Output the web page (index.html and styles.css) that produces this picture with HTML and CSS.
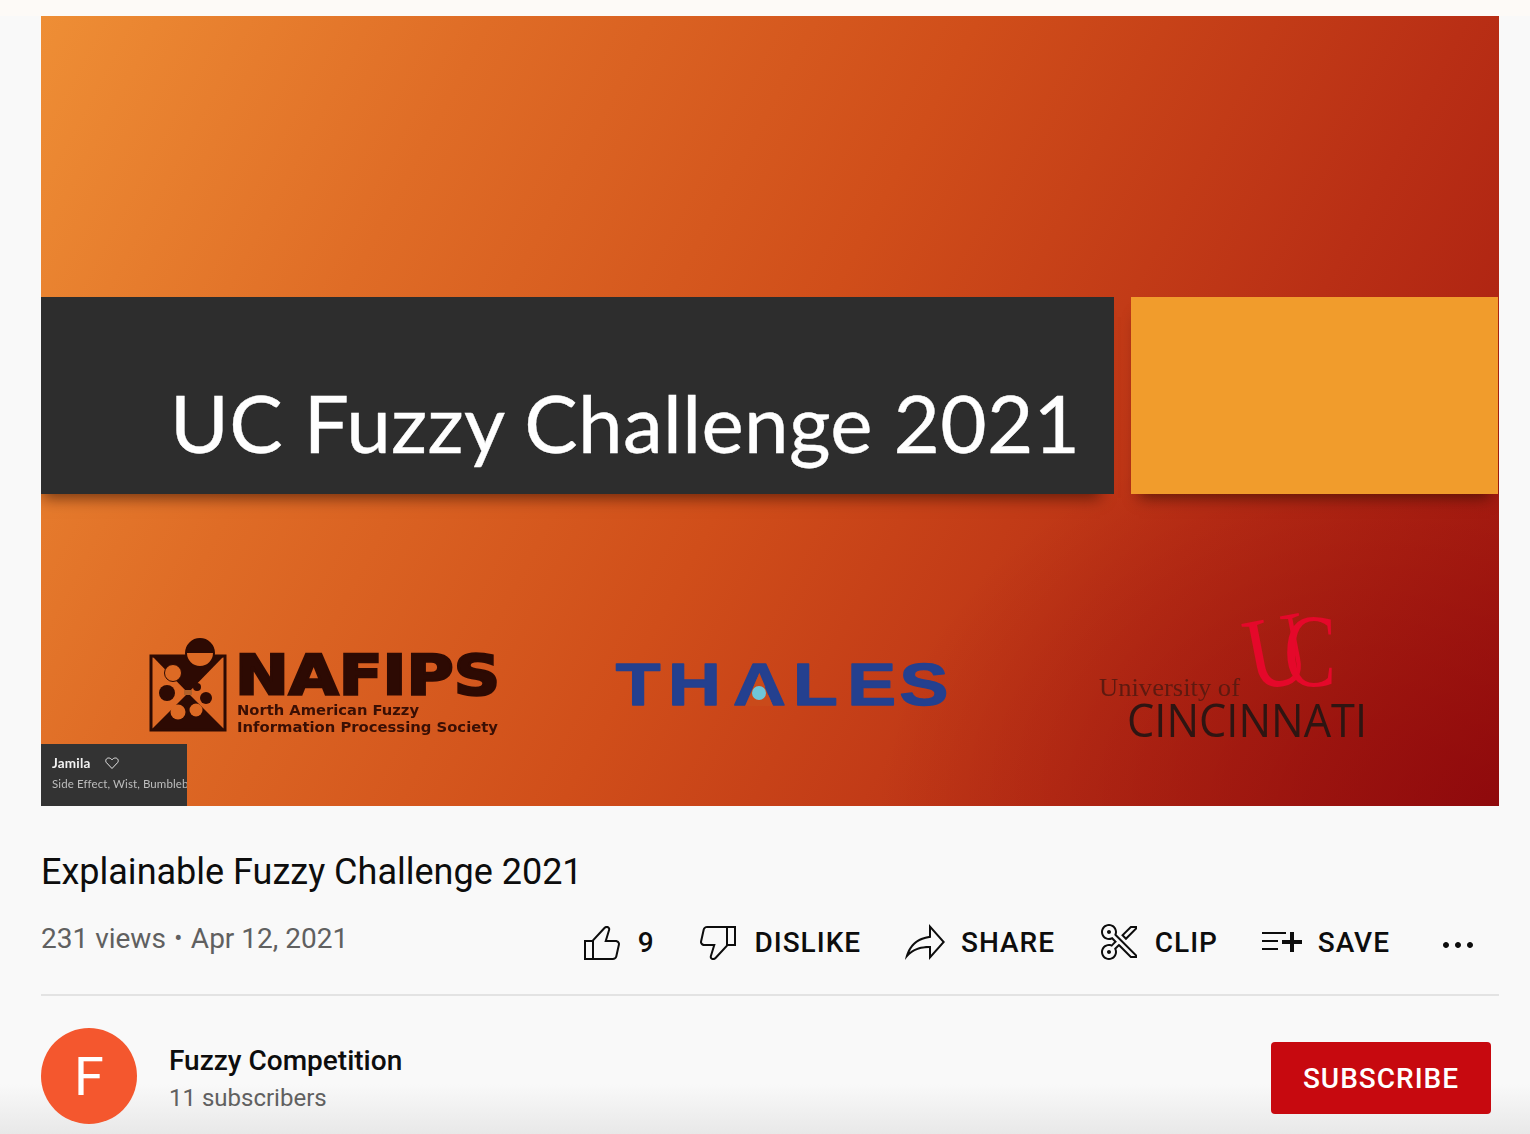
FILE: index.html
```html
<!DOCTYPE html>
<html lang="en">
<head>
<meta charset="utf-8">
<title>Explainable Fuzzy Challenge 2021</title>
<link rel="stylesheet" href="styles.css">
</head>
<body>
<div class="top-strip"></div>
<main class="watch">
  <section class="slide">
    <div class="band"></div>
    <div class="accent"></div>
    <svg class="slide-art" viewBox="41 16 1458 790" xmlns="http://www.w3.org/2000/svg">
      <text class="slide-title" x="170" y="453" textLength="910" lengthAdjust="spacing">UC Fuzzy Challenge 2021</text>
      <g class="logo-blur">
        <!-- NAFIPS emblem -->
        <path d="M153 657H223L188 693Z" fill="#2d0a03"/>
        <path d="M152 729L188 693L224 729Z" fill="#2d0a03"/>
        <rect x="151" y="656" width="74" height="74" fill="none" stroke="#2d0a03" stroke-width="3"/>
        <circle cx="173" cy="673" r="8.5" fill="#dd6a24" stroke="#2d0a03" stroke-width="1"/>
        <circle cx="200" cy="653" r="14" fill="#dd6a24" stroke="#2d0a03" stroke-width="2"/>
        <path d="M186 653a14 14 0 0 1 28 0Z" fill="#2d0a03"/>
        <circle cx="167" cy="693" r="8" fill="#2d0a03"/>
        <circle cx="206" cy="698" r="6" fill="#2d0a03"/>
        <circle cx="197" cy="687" r="4" fill="#2d0a03"/>
        <circle cx="178" cy="712" r="7.5" fill="#dd6a24"/>
        <circle cx="196" cy="710" r="6.5" fill="#dd6a24"/>
        <rect x="184" y="690" width="8" height="5" fill="#b0602a"/>
        <text class="nafips" x="235" y="694" textLength="265" lengthAdjust="spacingAndGlyphs">NAFIPS</text>
        <text class="nafips-sub" x="237" y="715" textLength="182" lengthAdjust="spacingAndGlyphs">North American Fuzzy</text>
        <text class="nafips-sub" x="237" y="732" textLength="261" lengthAdjust="spacingAndGlyphs">Information Processing Society</text>
        <!-- Thales -->
        <text class="thales" transform="scale(1.22 1)" x="504.7 547.6 600.8 650 694.4 737.3" y="705">THALES</text>
        <path d="M759 674L745 706H773Z" fill="#c94a1a"/>
        <circle cx="759" cy="693" r="7" fill="#6fc6d8"/>
        <!-- University of Cincinnati -->
        <text class="uc-mark" transform="rotate(-11 1277 655)" x="1246" y="686" textLength="62" lengthAdjust="spacingAndGlyphs">U</text>
        <text class="uc-mark" x="1284" y="686" textLength="52" lengthAdjust="spacingAndGlyphs">C</text>
        <text class="uc-univ" x="1099" y="696" textLength="141" lengthAdjust="spacingAndGlyphs">University of</text>
        <text class="uc-city" x="1127" y="737" textLength="240" lengthAdjust="spacingAndGlyphs">CINCINNATI</text>
      </g>
    </svg>
    <div class="now-playing">
      <div class="np-head">
        <span class="np-name">Jamila</span>
        <svg class="np-heart" viewBox="0 0 14 14" xmlns="http://www.w3.org/2000/svg"><path d="M7 12.5L1.4 6.6C0 4.9 1 2 3.6 2C5 2 6.2 2.7 7 3.8C7.8 2.7 9 2 10.4 2C13 2 14 4.9 12.6 6.6Z" fill="none" stroke="#e8e8e8" stroke-width="1"/></svg>
      </div>
      <div class="np-artists">Side Effect, Wist, Bumblebee</div>
    </div>
  </section>

  <h1 class="video-title">Explainable Fuzzy Challenge 2021</h1>

  <div class="info-row">
    <div class="video-meta">231 views <span class="dot">•</span> Apr 12, 2021</div>
    <div class="actions">
      <button class="action">
        <svg class="icon" viewBox="0 0 24 24"><path d="M18.77,11h-4.23l1.52-4.94C16.38,5.03,15.54,4,14.38,4c-0.58,0-1.14,0.24-1.52,0.65L7,11H3v10h4h1h9.43 c1.06,0,1.98-0.67,2.19-1.61l1.34-6C21.23,12.15,20.18,11,18.77,11z M7,20H4v-8h3V20z M19.98,13.17l-1.34,6 C18.54,19.65,18.03,20,17.43,20H8v-8.61l5.6-6.06C13.79,5.12,14.08,5,14.38,5c0.26,0,0.5,0.11,0.63,0.3 c0.07,0.1,0.15,0.26,0.09,0.47l-1.52,4.94L13.18,12h1.35h4.23c0.41,0,0.8,0.17,1.03,0.46C19.92,12.61,20.05,12.86,19.98,13.17z"/></svg>
        <span>9</span>
      </button>
      <button class="action">
        <svg class="icon" viewBox="0 0 24 24"><path d="M17,4h-1H6.57C5.5,4,4.59,4.67,4.38,5.61l-1.34,6C2.77,12.85,3.82,14,5.23,14h4.23l-1.52,4.94C7.62,19.97,8.46,21,9.62,21 c0.58,0,1.14-0.24,1.52-0.65L17,14h4V4H17z M10.4,19.67C10.21,19.88,9.92,20,9.62,20c-0.26,0-0.5-0.11-0.63-0.3 c-0.07-0.1-0.15-0.26-0.09-0.47l1.52-4.94l0.4-1.29H9.46H5.23c-0.41,0-0.8-0.17-1.03-0.46c-0.12-0.15-0.25-0.4-0.18-0.72l1.34-6 C5.46,5.35,5.97,5,6.57,5H16v8.61L10.4,19.67z M20,13h-3V5h3V13z"/></svg>
        <span>DISLIKE</span>
      </button>
      <button class="action">
        <svg class="icon" viewBox="0 0 24 24"><path d="M15,5.63L20.66,12L15,18.37V15v-1h-1c-3.96,0-7.14,1-9.75,3.09c1.84-4.07,5.11-6.4,9.89-7.1L15,9.86V9V5.63 M14,3v6 C6.22,10.13,3.11,15.33,2,21c2.78-3.97,6.44-6,12-6v6l8-9L14,3L14,3z"/></svg>
        <span>SHARE</span>
      </button>
      <button class="action">
        <svg class="icon" viewBox="0 0 24 24"><path d="M8,7c0,0.55-0.45,1-1,1S6,7.55,6,7c0-0.55,0.45-1,1-1S8,6.45,8,7z M7,16c-0.55,0-1,0.45-1,1c0,0.55,0.45,1,1,1s1-0.45,1-1 C8,16.45,7.55,16,7,16z M10.79,8.23L21,18.44V20h-3.27l-5.76-5.76l-1.27,1.27C10.89,15.97,11,16.47,11,17c0,2.21-1.79,4-4,4 s-4-1.79-4-4c0-2.21,1.79-4,4-4c0.42,0,0.81,0.08,1.19,0.2l1.37-1.37l-1.11-1.11C8,10.89,7.51,11,7,11c-2.21,0-4-1.79-4-4 c0-2.21,1.79-4,4-4s4,1.79,4,4C11,7.43,10.91,7.84,10.79,8.23z M10.08,8.94L9.65,8.5l0.19-0.58C9.95,7.58,10,7.28,10,7 c0-1.65-1.35-3-3-3S4,5.35,4,7c0,1.65,1.35,3,3,3c0.36,0,0.73-0.07,1.09-0.21L8.7,9.55l0.46,0.46l1.11,1.11l0.71,0.71l-0.71,0.71 L8.9,13.91l-0.43,0.43l-0.58-0.18C7.55,14.05,7.27,14,7,14c-1.65,0-3,1.35-3,3c0,1.65,1.35,3,3,3s3-1.35,3-3 c0-0.38-0.07-0.75-0.22-1.12l-0.25-0.61L10,14.8l1.27-1.27l0.71-0.71l0.71,0.71L18.15,19H20v-0.15L10.08,8.94z M17.73,4H21v1.56 l-5.52,5.52l-2.41-2.41L17.73,4z M18.15,5l-3.67,3.67l1,1L20,5.15V5H18.15z"/></svg>
        <span>CLIP</span>
      </button>
      <button class="action">
        <svg class="icon" viewBox="0 0 24 24"><path d="M22,13h-4v4h-2v-4h-4v-2h4V7h2v4h4V13z M14,7H2v1h12V7z M2,12h8v-1H2V12z M2,16h8v-1H2V16z"/></svg>
        <span>SAVE</span>
      </button>
      <button class="action action-more" aria-label="More">
        <svg class="icon" viewBox="0 0 24 24"><path d="M7.5,12c0,0.83-0.67,1.5-1.5,1.5S4.5,12.83,4.5,12s0.67-1.5,1.5-1.5S7.5,11.17,7.5,12z M12,10.5c-0.83,0-1.5,0.67-1.5,1.5 s0.67,1.5,1.5,1.5s1.5-0.67,1.5-1.5S12.83,10.5,12,10.5z M18,10.5c-0.83,0-1.5,0.67-1.5,1.5s0.67,1.5,1.5,1.5s1.5-0.67,1.5-1.5 S18.83,10.5,18,10.5z"/></svg>
      </button>
    </div>
  </div>

  <div class="owner-row">
    <div class="avatar">F</div>
    <div class="owner-text">
      <div class="owner-name">Fuzzy Competition</div>
      <div class="owner-subs">11 subscribers</div>
    </div>
    <button class="subscribe">SUBSCRIBE</button>
  </div>
</main>
<div class="bottom-fade"></div>
</body>
</html>
```
FILE: styles.css
```css
* { box-sizing: border-box; }
html, body { margin: 0; height: 1134px; overflow: hidden; }
body { background: #f9f9f9; font-family: Roboto, "Liberation Sans", sans-serif; color: #0d0d0d; position: relative; }
.top-strip { height: 16px; background: #fdfaf7; }
.watch { position: relative; z-index: 1; display: flex; flex-direction: column; padding: 0 31px 0 41px; }

.slide {
  position: relative; height: 790px; overflow: hidden;
  background:
    radial-gradient(ellipse 620px 420px at 100% 100%, rgba(130,0,10,.6), rgba(130,0,10,0)),
    linear-gradient(118deg, #ee8e35 0%, #df6c26 24%, #d04e1a 50%, #b92f15 76%, #a3170f 100%);
}
.band { position: absolute; left: 0; top: 281px; width: 1073px; height: 197px; background: #2d2d2d; box-shadow: -6px 12px 14px -8px rgba(40,10,0,.6); }
.accent { position: absolute; left: 1090px; top: 281px; width: 367px; height: 197px; background: #f19c2c; box-shadow: 0 12px 14px -8px rgba(40,10,0,.6); }
.slide-art { position: absolute; left: 0; top: 0; width: 1458px; height: 790px; }
.slide-title { font-family: Lato, sans-serif; font-size: 80px; fill: #ffffff; stroke: #ffffff; stroke-width: .4px; filter: blur(.3px); }
.logo-blur { filter: blur(.7px); }
.nafips { font-family: "DejaVu Sans", sans-serif; font-weight: 700; font-size: 56px; fill: #2d0a03; stroke: #2d0a03; stroke-width: 2.5px; }
.nafips-sub { font-family: "DejaVu Sans", sans-serif; font-weight: 700; font-size: 14px; fill: #3a0f04; }
.thales { font-family: "Liberation Sans", sans-serif; font-weight: 700; font-size: 60px; fill: #24408f; stroke: #24408f; stroke-width: 1.4px; stroke-linejoin: round; }
.uc-mark { font-family: "Liberation Serif", serif; font-size: 104px; fill: #e5082a; }
.uc-univ { font-family: "Liberation Serif", serif; font-size: 25px; fill: #5e1a10; }
.uc-city { font-family: "Open Sans", sans-serif; font-size: 46px; fill: #2e1512; }

.now-playing { position: absolute; left: 0; bottom: 0; width: 146px; height: 62px; background: #333333; padding: 11px 0 0 11px; overflow: hidden; filter: blur(.3px); }
.np-head { display: flex; align-items: center; gap: 14px; height: 16px; }
.np-name { font-family: Lato, sans-serif; font-size: 13.5px; font-weight: 700; letter-spacing: .2px; color: #f2f2f2; }
.np-heart { width: 14px; height: 14px; }
.np-artists { font-family: Lato, sans-serif; font-size: 11.5px; letter-spacing: .1px; color: #bdbdbd; white-space: nowrap; margin-top: 6px; }

.video-title { margin: 44px 0 0; font-size: 36px; line-height: 44px; font-weight: 400; color: #0d0d0d; }

.info-row { display: flex; justify-content: space-between; align-items: flex-start; margin-top: 26px; height: 76px; border-bottom: 2px solid #e3e3e3; width: 1458px; }
.video-meta { font-size: 28px; line-height: 36px; color: #606060; }
.dot { font-size: 24px; vertical-align: 2px; margin: 0 1.5px; }

.actions { display: flex; align-items: flex-start; margin-right: 17px; margin-top: -2px; }
.action { display: flex; align-items: center; gap: 12px; height: 48px; padding: 0; margin-left: 39.75px; border: 0; background: none; font: 500 28px Roboto, sans-serif; letter-spacing: 1px; color: #0d0d0d; }
.action:first-child { margin-left: 0; }
.icon { width: 48px; height: 48px; fill: #0d0d0d; display: block; }
.action-more { margin-top: 3px; margin-left: 44px; }

.owner-row { display: flex; align-items: flex-start; padding-top: 32px; width: 1450px; }
.avatar { width: 96px; height: 96px; border-radius: 50%; background: #f4572e; color: #fff; font-size: 54px; display: flex; align-items: center; justify-content: center; flex: none; }
.owner-text { margin-left: 32px; flex: 1; padding-top: 15px; }
.owner-name { font-size: 28px; line-height: 36px; font-weight: 500; color: #0d0d0d; }
.owner-subs { font-size: 24px; line-height: 38px; color: #606060; }
.subscribe { width: 220px; height: 72px; margin-top: 14px; border: 0; border-radius: 4px; background: #c7090f; color: #fff; font: 500 28px Roboto, sans-serif; letter-spacing: 1px; }

.bottom-fade { position: absolute; left: 0; right: 0; bottom: 0; height: 50px; background: linear-gradient(rgba(228,228,228,0), rgba(228,228,228,.8)); pointer-events: none; }
```
